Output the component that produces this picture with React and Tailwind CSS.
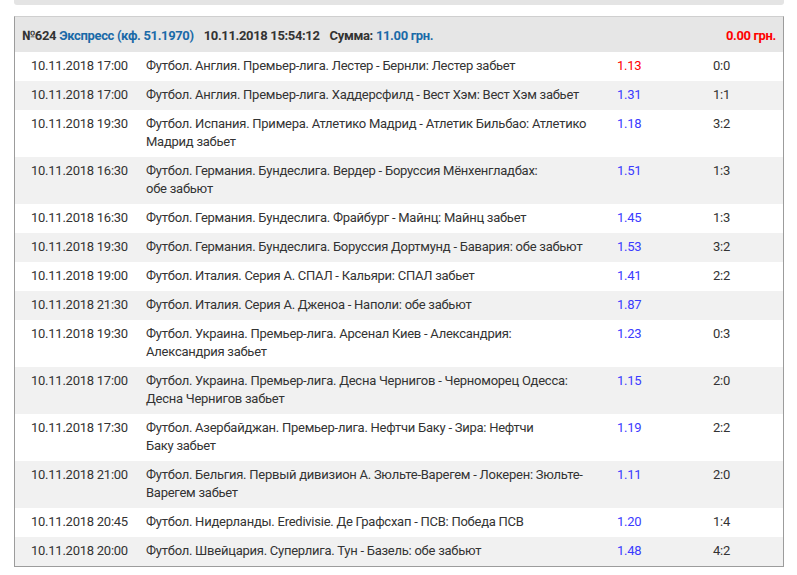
import React from "react";

const rows = [
  ["10.11.2018 17:00", ["Футбол. Англия. Премьер-лига. Лестер - Бернли: Лестер забьет"], "1.13", "0:0", true],
  ["10.11.2018 17:00", ["Футбол. Англия. Премьер-лига. Хаддерсфилд - Вест Хэм: Вест Хэм забьет"], "1.31", "1:1"],
  ["10.11.2018 19:30", ["Футбол. Испания. Примера. Атлетико Мадрид - Атлетик Бильбао: Атлетико", "Мадрид забьет"], "1.18", "3:2"],
  ["10.11.2018 16:30", ["Футбол. Германия. Бундеслига. Вердер - Боруссия Мёнхенгладбах:", "обе забьют"], "1.51", "1:3"],
  ["10.11.2018 16:30", ["Футбол. Германия. Бундеслига. Фрайбург - Майнц: Майнц забьет"], "1.45", "1:3"],
  ["10.11.2018 19:30", ["Футбол. Германия. Бундеслига. Боруссия Дортмунд - Бавария: обе забьют"], "1.53", "3:2"],
  ["10.11.2018 19:00", ["Футбол. Италия. Серия А. СПАЛ - Кальяри: СПАЛ забьет"], "1.41", "2:2"],
  ["10.11.2018 21:30", ["Футбол. Италия. Серия А. Дженоа - Наполи: обе забьют"], "1.87", ""],
  ["10.11.2018 19:30", ["Футбол. Украина. Премьер-лига. Арсенал Киев - Александрия:", "Александрия забьет"], "1.23", "0:3"],
  ["10.11.2018 17:00", ["Футбол. Украина. Премьер-лига. Десна Чернигов - Черноморец Одесса:", "Десна Чернигов забьет"], "1.15", "2:0"],
  ["10.11.2018 17:30", ["Футбол. Азербайджан. Премьер-лига. Нефтчи Баку - Зира: Нефтчи", "Баку забьет"], "1.19", "2:2"],
  ["10.11.2018 21:00", ["Футбол. Бельгия. Первый дивизион А. Зюльте-Варегем - Локерен: Зюльте-", "Варегем забьет"], "1.11", "2:0"],
  ["10.11.2018 20:45", ["Футбол. Нидерланды. Eredivisie. Де Графсхап - ПСВ: Победа ПСВ"], "1.20", "1:4"],
  ["10.11.2018 20:00", ["Футбол. Швейцария. Суперлига. Тун - Базель: обе забьют"], "1.48", "4:2"],
];

export default function App() {
  return (
    <div
      className="w-[797px] h-[575px] bg-white overflow-hidden px-[14px] pr-[13px] tracking-[-0.25px]"
      style={{ fontFamily: "Roboto, 'Liberation Sans', sans-serif" }}
    >
      <div className="h-[5px] bg-[#e4e4e4] rounded-b-[3px]" />
      <div className="mt-[11px] border-t border-t-[#cfcfcf] border-x border-b border-x-[#9c9c9c] border-b-[#9c9c9c] text-[13px] leading-[18px]">
        <div className="h-[35px] bg-[#e6e6e6] flex items-center pt-[2px] pl-[7px] pr-[7px] font-bold text-[#333] tracking-[-0.35px]">
          <span>№624</span>
          <span className="ml-[3px] text-[#1a6aa8]">Экспресс (кф. 51.1970)</span>
          <span className="ml-[10px]">10.11.2018 15:54:12</span>
          <span className="ml-[10px]">Сумма:</span>
          <span className="ml-[3px] text-[#1a6aa8]">11.00 грн.</span>
          <span className="ml-auto text-[#f00]">0.00 грн.</span>
        </div>
        {rows.map(([date, desc, odd, score, red], i) => (
          <div
            key={i}
            className={`flex pl-[16px] ${desc.length > 1 ? "h-[47px]" : "h-[29px]"} pt-[5px] text-[#333] ${i % 2 === 1 ? "bg-[#f1f1f1]" : "bg-white"}`}
          >
            <div className="w-[115px] shrink-0 whitespace-nowrap">{date}</div>
            <div className="w-[471px] shrink-0 whitespace-nowrap">
              {desc.map((l, j) => (
                <div key={j}>{l}</div>
              ))}
            </div>
            <div className={`w-[96px] shrink-0 ${red ? "text-[#f00]" : "text-[#3b3bff]"}`}>{odd}</div>
            <div className="shrink-0">{score}</div>
          </div>
        ))}
      </div>
    </div>
  );
}
